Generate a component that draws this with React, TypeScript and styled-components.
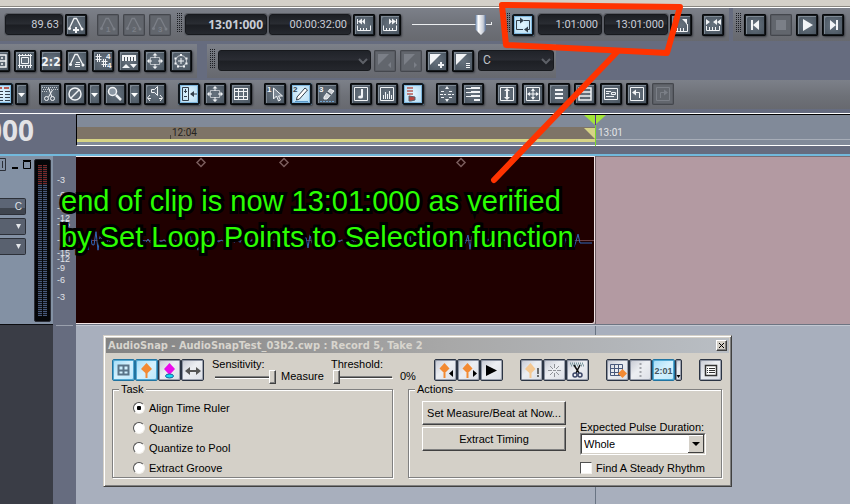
import React from 'react';
import styled, { createGlobalStyle, css } from 'styled-components';

const UI = '"Liberation Sans", Arial, sans-serif';
const TITLE = '"DejaVu Sans Condensed", "DejaVu Sans", sans-serif';

const GlobalStyle = createGlobalStyle`
  *, *::before, *::after { box-sizing: border-box; }
  body { margin: 0; background: #666c7f; font: 11px/12px ${UI}; color: #000; }
  button, select, input { font: inherit; margin: 0; }
  svg { display: block; flex: none; }
`;

const Page = styled.main`
  position: relative;
  display: flex;
  flex-direction: column;
  min-height: 100vh;
  overflow: hidden;
  background: #666c7f;
`;

const MenuEdge = styled.div`
  height: 8px;
  background: #d4d0c8;
  border-bottom: 1px solid #fff;
  box-shadow: inset 0 -1px #8a8780;
`;

/* ---------- toolbars ---------- */

const Toolbar = styled.div<{ $h: number; $gap?: number }>`
  display: flex;
  height: ${p => p.$h}px;
  margin-bottom: ${p => p.$gap ?? 3}px;
`;

const Panel = styled.div<{ $grow?: boolean; $top?: number }>`
  display: flex;
  align-items: flex-start;
  flex: ${p => (p.$grow ? '1 0 auto' : 'none')};
  padding-top: ${p => p.$top ?? 6}px;
  background: linear-gradient(#7c8089, #6e7178 55%, #67696f);
`;

const Group = styled.div<{ $lead?: number; $gap?: number }>`
  display: flex;
  flex: none;
  gap: ${p => p.$gap ?? 4}px;
  margin-left: ${p => p.$lead ?? 0}px;
`;

const Spacer = styled.div<{ $w: number }>`
  flex: none;
  width: ${p => p.$w}px;
`;

const Grip = styled.span`
  flex: none;
  width: 5px;
  height: 20px;
  margin: -1px 3px 0 0;
  background: conic-gradient(from 270deg at 1px 1px, #1b1d22 90deg, transparent 0) 0 0 / 2px 2px;
`;

const ToolButton = styled.button<{ $lit?: boolean; $narrow?: boolean }>`
  flex: none;
  width: ${p => (p.$narrow ? 13 : 22)}px;
  height: 22px;
  padding: 0;
  overflow: hidden;
  border: 0;
  border-radius: 2px;
  color: #f2f4f6;
  background: radial-gradient(#66727e, #434e59);
  box-shadow: inset 0 0 0 1px #06080a, inset 0 0 0 2px #15191d, inset 3px 3px #7d8893, 1px 1px 2px #3a3c42;
  ${p => p.$lit && css`
    color: #34404c;
    background: radial-gradient(#e4f6ff, #a4d2ee);
    box-shadow: inset 0 0 0 2px #10161c, inset 0 0 0 3px #7db5dc, 1px 1px 2px #3a3c42;
  `}
  &:disabled {
    color: #7b7f87;
    background: #62666d;
    box-shadow: inset 0 0 0 1px #44474d, inset 0 0 0 2px #595c63;
  }
`;

const Display = styled.output<{ $w: number; $strong?: boolean }>`
  flex: none;
  width: ${p => p.$w}px;
  height: 21px;
  padding-right: 3px;
  border: 1px solid #17191d;
  border-radius: 3px;
  background: linear-gradient(#1c1f24, #2a2d33 48%, #1b1d22 52%, #25282e);
  box-shadow: 0 0 0 1px #5b5e65;
  color: #c9cdd6;
  text-align: right;
  font: ${p => (p.$strong ? 'bold 12px/19px "Noto Sans"' : '11px/19px Roboto')}, sans-serif;
`;

const DarkSelectBox = styled.label<{ $w: number }>`
  display: grid;
  flex: none;
  width: ${p => p.$w}px;
  height: 21px;
  > * { grid-area: 1 / 1; }
  > svg { place-self: center end; margin-right: 3px; pointer-events: none; }
`;

const DarkSelect = styled.select`
  appearance: none;
  width: 100%;
  height: 21px;
  padding: 0 4px;
  border: 1px solid #17191d;
  border-radius: 3px;
  background: linear-gradient(#202329, #2a2c33 48%, #1d1f24 52%, #25272d);
  color: #c0c3ca;
  font: 12px/17px Roboto, sans-serif;
`;

const Fader = styled.input`
  appearance: none;
  flex: none;
  width: 80px;
  height: 22px;
  margin: 0;
  background: linear-gradient(#eceef0, #eceef0) 0 10px / 80px 1px no-repeat,
    linear-gradient(#eceef0, #eceef0) 79px 8px / 1px 3px no-repeat;
  &::-webkit-slider-thumb {
    appearance: none;
    width: 11px;
    height: 20px;
    background: linear-gradient(90deg, #4c6f9d, #fff 30%, #c6cbd5 75%, #526b92);
    clip-path: polygon(0 0, 100% 0, 100% 72%, 50% 100%, 0 72%);
  }
`;

/* ---------- icons on the 22px tool buttons ---------- */

const S = { stroke: 'currentColor', fill: 'none' };
const F = { fill: 'currentColor' };
const Digit = ({ x, y, c, size = 8 }: { x: number; y: number; c: string; size?: number }) => (
  <text x={x} y={y} fontSize={size} fontWeight="bold" fontFamily="Liberation Sans, sans-serif" fill="currentColor">{c}</text>
);
const metro = <g><path {...S} strokeWidth="1.3" d="M4.500 14L9 4.500h2.500L17 15" /><circle {...F} cx="4.500" cy="14.500" r="1.500" /><circle {...F} cx="17" cy="15" r="1.500" /></g>;
const arrows4 = <path {...F} d="M11 3l2.500 2.500h-2V8h-1V5.500h-2zM11 19l2.500-2.500h-2V14h-1v2.500h-2zM3 11l2.500-2.500v2H8v1H5.500v2zM19 11l-2.500-2.500v2H14v1h2.500v2z" />;
const frame = <path {...S} d="M4.500 4.500h13v13h-13z" />;
const corner = <path {...F} d="M4 4h11L4 15z" />;

const icons: Record<string, React.ReactNode> = {
  metroPlus: <g>{metro}<path {...S} strokeWidth="2" d="M11 13v6M8 16h6" /></g>,
  metro1: <g>{metro}<Digit x={9} y={18} c="1" /></g>,
  metro2: <g>{metro}<Digit x={9} y={18} c="2" /></g>,
  metro3: <g>{metro}<Digit x={9} y={18} c="3" /></g>,
  metroList: <g>{metro}<path {...S} d="M10 12.500h4M9 14.500h5M9 16.500h5" /></g>,
  gridBox: <path {...S} strokeWidth="1.500" d="M4 5h14v12H4zM11 5v12M4 11h14M7 8h2M13 8h2M7 14h2M13 14h2" />,
  film: <path {...S} d="M4 5.500h14M4 15.500h14M5.500 4v14M16.500 4v14M7.500 7.500h7v6h-7zM8.500 4v1M11.500 4v1M14.500 4v1M8.500 16v2M11.500 16v2M14.500 16v2" />,
  ratio: <text x="11" y="15.500" textAnchor="middle" fontSize="12" fontWeight="bold" fontFamily="DejaVu Sans Condensed, sans-serif" fill="currentColor">2:2</text>,
  sharps: <g><path {...S} d="M5.500 4v8M7.500 4v8M3.500 6.500h6M3.500 9.500h6M11.500 9v8M13.500 9v8M9.500 11.500h6M9.500 14.500h6" /><Digit x={14} y={9} c="4" /><Digit x={15} y={18} c="4" /></g>,
  rulerArrows: <g><path {...F} d="M4 5h14v6H4zM4 18l4-4 4 4zM12 14h7l-3.500 4z" /><path stroke="#46515c" d="M6.500 7v4M9.500 7v4M12.500 7v4M15.500 7v4" /></g>,
  move: <g>{arrows4}<path {...S} d="M6.500 7.500h9v7h-9z" opacity=".6" /></g>,
  ring: <g><circle {...S} cx="11" cy="11" r="5.500" opacity=".7" /><path {...S} d="M11 8v6M8 11h6" /><path {...S} strokeWidth="2" d="M10 5h2M4.500 8.500h2M15.500 8.500h2M4.500 13.500h2M15.500 13.500h2M7 16.500h2M13 16.500h2" /></g>,
  rewRuler: <g><path {...F} d="M4 5h1v5H4zM5 7.500l4-3v6zM9 7.500l3-3v6z" /><path {...S} d="M4.500 11.500v5h13v-5M7.500 14v2M10.500 14v2M13.500 14v2" /></g>,
  fwdRuler: <g><path {...F} d="M17 5h1v5h-1zM17 7.500l-4-3v6zM13 7.500l-3-3v6z" /><path {...S} d="M4.500 11.500v5h13v-5M7.500 14v2M10.500 14v2M13.500 14v2" /></g>,
  loop: <g><path {...S} d="M4.500 15.500v-9H8M12 6.500h5.500v9H16M11 15.500H4.500" /><path {...F} d="M8 3.500v6l4-3zM16 12.500v6l-4-3z" /></g>,
  punchIn: <g><path {...F} d="M17 5v6l-2-3-3-3z" /><path {...S} d="M4.500 12v5.500h13V10M7.500 14v3M10.500 14v3M13.500 14v3" /></g>,
  punchOut: <g><path {...F} d="M4 5l4 3-4 3zM11 8l4-3v6zM15 8l4-3v6z" /><path {...S} d="M4.500 12v4.500h13V12M7.500 13v3M10.500 13v3M13.500 13v3" /></g>,
  toStart: <path {...F} d="M7 6h2v10H7zM9 11l6-5v10z" />,
  toEnd: <path {...F} d="M14 6h2v10h-2zM14 11L8 6v10z" />,
  stop: <path {...F} d="M6 6h10v10H6z" />,
  play: <path {...F} d="M7 5v12l10-6z" />,
  cornerLeft: <g>{corner}<path {...F} d="M17 12v6l-3-3z" /></g>,
  cornerRight: <g>{corner}<path {...F} d="M14 12v6l3-3z" /></g>,
  cornerPlus: <g>{corner}<path {...S} strokeWidth="2" d="M15 12v6M12 15h6" /></g>,
  cornerList: <g>{corner}<path {...S} d="M14 13.500h4M14 15.500h4M14 17.500h4" /></g>,
  columns: <g><path stroke="#b65c56" strokeWidth="2" d="M0 5h11M13 5h5" /><path {...S} strokeDasharray="5 2" d="M0 8.500h19M0 11.500h19M0 14.500h19M0 17.500h19" /></g>,
  cut: <g><path {...S} strokeDasharray="1 1" opacity=".7" d="M3 4.500h16M4 6.500h15M3 8.500h6" /><path {...S} d="M9.500 5l3.500 9M13.500 7l-4 7" /><circle {...S} cx="7.500" cy="15.500" r="2" /><circle {...S} cx="13.500" cy="15.500" r="2" /></g>,
  mute: <g><circle {...S} strokeWidth="1.500" cx="11" cy="11" r="6" /><path {...S} strokeWidth="1.500" d="M7 15l8-8" /></g>,
  zoom: <g><circle fill="#8b97a3" stroke="currentColor" strokeWidth="1.500" cx="8.500" cy="8.500" r="4" /><path {...S} strokeWidth="2.500" d="M12 12l5 5" /></g>,
  scrub: <path {...S} d="M7.500 6.500h3l3-3v9l-3-3h-3zM6 12l-2.500 3L6 18M16 12l2.500 3L16 18M4 15.500h3M15 15.500h3" />,
  dock: <g><path {...S} d="M4.500 4.500h6v13h-6zM7.500 6v4M6 8.500h3M6 13.500h3M13 11h6" /><path {...F} d="M12 11l4-3v6z" /></g>,
  filmWide: <path {...S} d="M4 5.500h14M4 8.500h14M4 13.500h14M4 16.500h14M4.500 5v12M8.500 5v12M13.500 5v12M17.500 5v12" />,
  select1: <g><Digit x={3} y={9} c="1" /><path {...S} d="M9.500 5v11l3-3 2 5 2-1-2-4h4z" fill="#7d8894" /></g>,
  pencil2: <g><Digit x={3} y={9} c="2" /><path {...S} d="M7 14l8-9 2.500 2-8 9-3 1z" fill="#fff" /><path {...S} d="M5 18.500h13" stroke="#5b9aca" /></g>,
  erase3: <g><Digit x={3} y={9} c="3" /><path {...S} d="M8 14l6-8 4 2-7 8H8z" fill="#cfd3d8" /><path d="M11 9l4 3" stroke="#46515c" strokeWidth="1.500" /><path stroke="#6fa2cf" strokeDasharray="2 1" d="M4 18.500h14" /></g>,
  note: <g>{frame}<path {...F} d="M11 6h2v8h-2z" /><ellipse {...F} cx="10.500" cy="14" rx="2.500" ry="1.500" /></g>,
  bars: <g>{frame}<path {...S} d="M7.500 12v4M9.500 9v7M11.500 11v5M13.500 8v8M15.500 12v4" /></g>,
  clipList: <g><path stroke="#b65c56" strokeWidth="1.500" d="M5 5h6M5 8h6M5 11h6" /><path d="M7 13l6 1v3l-4 1H7z" fill="#b8443c" stroke="#54606c" /></g>,
  spread: <g><path {...F} d="M11 3l2 3H9zM11 19l2-3H9z" /><path {...S} strokeDasharray="3 1" d="M5 8.500h4M13 8.500h4M4 11.500h6M12 11.500h6M5 14.500h4M13 14.500h4" /></g>,
  listBars: <g><path {...F} d="M9 4h9v2H9zM9 8h9v2H9zM9 12h9v2H9zM12 16h6v2h-6z" /><path {...S} d="M4 5.500h5M4 9.500h5M4 13.500h5" /></g>,
  vArrows: <g>{frame}<path {...F} d="M11 5l3 3h-2v6h2l-3 3-3-3h2V8H8z" /></g>,
  allArrows: <g>{frame}<path {...S} d="M11 6v10M6 11h10" /><path {...F} d="M11 5l2 3H9zM11 17l2-3H9zM5 11l3-2v4zM17 11l-3-2v4z" /></g>,
  lines: <path {...S} strokeWidth="2" d="M7 7h8M7 11h8M7 15h8" />,
  lineFrame: <path {...S} strokeWidth="1.500" d="M5 5h12v12H5zM5 9h12M5 13h12" />,
  flagFrame: <path {...S} d="M4.500 5.500h13v11h-13zM6 8.500h5M6 10.500h3M6 13.500h8M11.500 9.500h4v2h-4z" />,
  undoFrame: <g>{frame}<path {...S} d="M9 9.500h4.500V15" /><path {...F} d="M6 9.500l4-3v6z" /></g>,
  redoFrame: <g>{frame}<path {...S} d="M8.500 15V9.500H13" /><path {...F} d="M16 9.500l-4-3v6z" /></g>,
};

type ToolProps = { icon: string; label: string; lit?: boolean; off?: boolean };
const Tool = ({ icon, label, lit, off }: ToolProps) => (
  <ToolButton type="button" aria-label={label} $lit={lit} disabled={off}>
    <svg width="22" height="22" viewBox="0 0 22 22">{icons[icon]}</svg>
  </ToolButton>
);
const More = ({ label }: { label: string }) => (
  <ToolButton type="button" aria-label={label} $narrow>
    <svg width="13" height="22" viewBox="0 0 13 22"><path fill="#fff" d="M3 10h7l-3.500 4z" /></svg>
  </ToolButton>
);
const Chevron = () => (
  <svg width="10" height="8" viewBox="0 0 10 8"><path d="M1 2l4 4 4-4" fill="none" stroke="#5d6067" strokeWidth="2" /></svg>
);

const Transport = () => (
  <Toolbar $h={33}>
    <Panel>
      <Group $lead={5} $gap={2}>
        <Display $w={58} aria-label="Tempo">89.63</Display>
        <Tool icon="metroPlus" label="Insert tempo" />
      </Group>
      <Group $lead={10}>
        <Tool icon="metro1" label="Tempo ratio 1" off />
        <Tool icon="metro2" label="Tempo ratio 2" off />
        <Tool icon="metro3" label="Tempo ratio 3" off />
      </Group>
      <Spacer $w={6} />
      <Grip />
      <Group $gap={2}>
        <Display $w={82} $strong aria-label="Now time">13:01:000</Display>
        <Display $w={82} aria-label="Now time in frames">00:00:32:00</Display>
      </Group>
      <Group $lead={2}>
        <Tool icon="rewRuler" label="Previous measure" />
        <Tool icon="fwdRuler" label="Next measure" />
      </Group>
      <Spacer $w={11} />
      <Fader type="range" aria-label="Position" defaultValue={92} />
    </Panel>
    <Panel>
      <Spacer $w={13} />
      <Grip />
      <Group $gap={2} $lead={-1}>
        <Tool icon="loop" label="Loop" lit />
        <Spacer $w={0} />
        <Display $w={64} aria-label="Loop start">1:01:000</Display>
        <Display $w={64} aria-label="Loop end">13:01:000</Display>
      </Group>
      <Group $lead={2} $gap={10}>
        <Tool icon="punchIn" label="Set loop points to selection" />
        <Tool icon="punchOut" label="Set punch points" />
      </Group>
      <Spacer $w={5} />
    </Panel>
    <Spacer $w={4} />
    <Panel $grow>
      <Spacer $w={3} />
      <Grip />
      <Group>
        <Tool icon="toStart" label="Go to start" />
        <Tool icon="stop" label="Stop" off />
        <Tool icon="play" label="Play" />
        <Tool icon="toEnd" label="Go to end" />
      </Group>
    </Panel>
  </Toolbar>
);

const SnapBar = () => (
  <Toolbar $h={34} $gap={2}>
    <Panel>
      <Group $lead={-12}>
        <Tool icon="gridBox" label="Grid" />
        <Tool icon="film" label="Fit to time" />
        <Tool icon="ratio" label="Length" />
        <Tool icon="metroList" label="Tempo list" />
        <Tool icon="sharps" label="Meter and key" />
        <Tool icon="rulerArrows" label="Ruler" />
        <Tool icon="move" label="Slide" />
        <Tool icon="ring" label="Process" />
      </Group>
      <Spacer $w={5} />
    </Panel>
    <Spacer $w={10} />
    <Panel>
      <Spacer $w={3} />
      <Grip />
      <DarkSelectBox $w={153}>
        <DarkSelect aria-label="Marker"><option></option></DarkSelect>
        <Chevron />
      </DarkSelectBox>
      <Group $lead={3}>
        <Tool icon="cornerLeft" label="Previous marker" off />
        <Tool icon="cornerRight" label="Next marker" off />
        <Tool icon="cornerPlus" label="Insert marker" />
        <Tool icon="cornerList" label="Marker list" />
      </Group>
      <Spacer $w={4} />
      <DarkSelectBox $w={76}>
        <DarkSelect aria-label="Key"><option>C</option></DarkSelect>
        <Chevron />
      </DarkSelectBox>
      <Spacer $w={2} />
    </Panel>
  </Toolbar>
);

const TrackBar = () => (
  <Toolbar $h={29} $gap={4}>
    <Panel $grow $top={3}>
      <Group $lead={-9} $gap={2}>
        <Tool icon="columns" label="Snap grid" lit />
        <More label="Snap options" />
      </Group>
      <Group $lead={11} $gap={3}>
        <Tool icon="cut" label="Split" />
        <Group $gap={2}><Tool icon="mute" label="Mute" /><More label="Mute options" /></Group>
        <Group $gap={2}><Tool icon="zoom" label="Zoom" /><More label="Zoom options" /></Group>
        <Tool icon="scrub" label="Scrub" />
      </Group>
      <Group $lead={12}>
        <Tool icon="dock" label="Show inspector" lit />
        <Tool icon="move" label="Navigator" />
        <Tool icon="filmWide" label="Video" />
      </Group>
      <Group $lead={12}>
        <Tool icon="select1" label="Select tool" />
        <Tool icon="pencil2" label="Draw tool" lit />
        <Tool icon="erase3" label="Erase tool" />
      </Group>
      <Group $lead={12}>
        <Tool icon="note" label="Notes" />
        <Tool icon="bars" label="Controllers" />
        <Tool icon="clipList" label="Track layers" lit />
      </Group>
      <Group $lead={12}>
        <Tool icon="spread" label="Spread" />
        <Tool icon="listBars" label="Layers" />
      </Group>
      <Group $lead={12}>
        <Tool icon="vArrows" label="Fit tracks vertically" />
        <Tool icon="allArrows" label="Fit project" />
        <Tool icon="lines" label="Show all tracks" />
        <Tool icon="lineFrame" label="Show selected tracks" />
        <Tool icon="flagFrame" label="Track manager" />
        <Tool icon="undoFrame" label="Undo view" />
        <Tool icon="redoFrame" label="Redo view" off />
      </Group>
    </Panel>
  </Toolbar>
);

/* ---------- ruler and track ---------- */

const CLIP = 519;

const RulerRow = styled.div`
  display: flex;
  height: 33px;
  border-top: 1px solid #fff;
`;

const NowTime = styled.div`
  display: flex;
  justify-content: flex-end;
  flex: none;
  width: 76px;
  padding-right: 42px;
  color: #e3e3e6;
  font: bold 28px/32px "Noto Sans", sans-serif;
`;

const Ruler = styled.div`
  display: flex;
  flex: 1;
  position: relative;
  border: solid #000;
  border-width: 1px 0 0 1px;
  border-bottom: 1px solid #fff;
  background: #818a99;
  color: #e3e4e6;
  font: 10px/12px Roboto, sans-serif;
`;

const LoopSpan = styled.div`
  flex: none;
  width: ${CLIP}px;
  height: 15px;
  margin-top: 12px;
  padding-left: 93px;
  border-bottom: 3px solid #d6d385;
  background: #7e7467;
  color: #26241f;
`;

const Beat = styled.span<{ $dark?: boolean }>`
  display: block;
  padding-left: 2px;
  background: linear-gradient(#4b463f, #4b463f) 0 100% / ${p => (p.$dark ? 1 : 0)}px 4px no-repeat;
`;

const AfterLoop = styled.div`
  flex: 1;
  height: 13px;
  margin-top: 12px;
  border-bottom: 1px solid #a7adb8;
`;

const NowMarker = styled.svg`
  position: absolute;
  left: 507px;
  top: 0;
`;

const Divider = styled.div`
  height: 10px;
  border-bottom: 2px solid #72b9dc;
`;

const TrackRow = styled.section`
  display: flex;
  height: 169px;
`;

const Strip = styled.div`
  display: flex;
  flex: none;
  width: 53px;
  background: #8391a4;
  border-bottom: 1px solid #0c0d10;
`;

const StripControls = styled.div`
  display: flex;
  flex-direction: column;
  width: 34px;
`;

const WindowMarks = styled.svg`
  margin-bottom: 20px;
`;

const StripButton = styled.button<{ $shade?: boolean }>`
  width: 26px;
  height: 17px;
  margin-bottom: 3px;
  padding: 0 3px 0 0;
  border: 1px solid #2c3038;
  border-left: 0;
  border-radius: 0 2px 2px 0;
  background: ${p => (p.$shade ? 'linear-gradient(#5c6575 60%, #3f454f 60%)' : '#59616f')};
  color: #dfe2e8;
  text-align: right;
  font: 10px/13px "Liberation Sans", sans-serif;
  > svg { margin-left: auto; }
`;

const Meter = styled.div`
  display: flex;
  gap: 1px;
  width: 17px;
  height: 163px;
  margin-top: 3px;
  padding: 5px 3px;
  border: 1px solid #2a2d36;
  border-radius: 2px;
  background: #050608;
`;

const Leds = styled.span`
  flex: 1;
  background: repeating-linear-gradient(transparent 0 1px, #12151c 1px 2px),
    linear-gradient(#7a2a2a 20px, #47597a 20px);
`;

const Scale = styled.div`
  flex: none;
  width: 23px;
  padding-top: 19px;
  background: #666c7f;
  color: #e0e2e8;
  font: 9px/10px "Liberation Sans", sans-serif;
`;

const Mark = styled.div<{ $h: number }>`
  height: ${p => p.$h}px;
  padding-left: 4px;
`;

const Lane = styled.div`
  flex: 1;
  display: flex;
  border-bottom: 1px solid #6d7482;
  background: #b39aa2;
`;

const Clip = styled.div`
  flex: none;
  width: ${CLIP}px;
  border: 1px solid #f2e4e4;
  border-left: 0;
  border-bottom-right-radius: 3px;
  background: #200000;
`;

const LaneRest = styled.div`
  flex: 1;
  border-left: 1px solid #6e5f66;
  border-top: 1px solid #7a6d74;
  background: #b39aa2;
`;

const Below = styled.section`
  display: flex;
  flex: 1;
`;

const BelowLeft = styled.div`
  flex: none;
  width: 53px;
  background: #3a3d46;
`;

const BelowScale = styled.div`
  flex: none;
  width: 23px;
  padding: 0 3px;
  &::before { content: ''; display: block; height: 1px; background: #9aa0ad; }
`;

const BelowLane = styled.div`
  flex: 1;
  border-top: 1px solid #c3c8d2;
  background: #a8afbd;
  &::before { content: ''; display: block; width: ${CLIP + 1}px; height: 100%; border-right: 1px solid #697483; }
`;

const scaleMarks: [string, number][] = [
  ['-3', 15], ['-6', 13], ['-9', 10], ['-12', 6], ['-15', 16], ['-∞', 13],
  ['-15', 6], ['-12', 9], ['-9', 12], ['-6', 17], ['-3', 10],
];

const wave = Array.from({ length: 259 }, (_, i) => {
  const x = i * 2;
  const burst = Math.max(0, Math.sin(x / 11) * Math.sin(x / 37 + 1));
  const y = 84 + Math.sin(i * 2.4) * (1.5 + burst * 9);
  return `${i ? 'L' : 'M'}${x} ${x > 503 ? 86 : y.toFixed(1)}`;
}).join('');

const Down = () => (
  <svg width="7" height="6" viewBox="0 0 7 6"><path d="M1 0h5L3.500 5z" fill="#e3e6ea" /></svg>
);

const Arrange = () => (
  <>
    <RulerRow>
      <NowTime>000</NowTime>
      <Ruler>
        <LoopSpan><Beat $dark>12:04</Beat></LoopSpan>
        <AfterLoop><Beat>13:01</Beat></AfterLoop>
        <NowMarker width="22" height="31" viewBox="0 0 22 31">
          <path d="M0 0h22L11 10z" fill="#a2e43a" />
          <path d="M0 13h11v11z" fill="#d6d385" />
          <path d="M11.500 0v10" stroke="#5a2c96" />
          <path d="M11.500 10v21" stroke="#7ad82c" />
        </NowMarker>
      </Ruler>
    </RulerRow>
    <Divider />
    <TrackRow>
      <Strip>
        <StripControls>
          <WindowMarks width="34" height="22" viewBox="0 0 34 22">
            <path d="M0 2.500h5.500v12H0M2.500 5v7" fill="none" stroke="#2c3038" />
            <path d="M12 12h6" stroke="#000" strokeWidth="2" />
            <path d="M23.500 5.500h7v7h-7zM23 4.500h8" fill="none" stroke="#000" />
          </WindowMarks>
          <StripButton type="button" $shade>C</StripButton>
          <StripButton type="button" aria-label="Input"><Down /></StripButton>
          <StripButton type="button" aria-label="Output"><Down /></StripButton>
        </StripControls>
        <Meter><Leds /><Leds /></Meter>
      </Strip>
      <Scale>{scaleMarks.map(([t, h], i) => <Mark key={i} $h={h}>{t}</Mark>)}</Scale>
      <Lane>
        <Clip>
          <svg width="518" height="165" viewBox="0 0 518 165">
            <path d="M0 83.500h518" stroke="#6c4046" />
            <path d={wave} fill="none" stroke="#2f66b8" />
            {[125, 208, 385].map(x => (
              <path key={x} d={`M${x} 1.500l4 4-4 4-4-4z`} fill="none" stroke="#7a5c5c" strokeWidth="1.500" />
            ))}
          </svg>
        </Clip>
        <LaneRest />
      </Lane>
    </TrackRow>
    <Below><BelowLeft /><BelowScale /><BelowLane /></Below>
  </>
);

/* ---------- AudioSnap window ---------- */

const raised = css`
  border: 1px solid;
  border-color: #fff #404040 #404040 #fff;
  box-shadow: inset -1px -1px #808080;
  background: #d4d0c8;
`;

const Window = styled.section`
  position: absolute;
  left: 103px;
  top: 335px;
  width: 629px;
  padding: 2px;
  border: 1px solid;
  border-color: #d4d0c8 #404040 #404040 #d4d0c8;
  box-shadow: inset 1px 1px #fff, inset -1px -1px #808080;
  background: #d4d0c8;
`;

const TitleBar = styled.header`
  display: flex;
  align-items: center;
  justify-content: space-between;
  height: 15px;
  padding: 0 2px;
  background: linear-gradient(90deg, #838383, #a8a8a8 55%, #b9bec4);
  color: #d8d5ce;
  font: bold 11px/15px ${TITLE};
`;

const Title = styled.h1`
  margin: 0;
  font: inherit;
`;

const CloseButton = styled.button`
  ${raised}
  width: 11px;
  height: 11px;
  padding: 1px;
`;

const WindowBar = styled.div`
  display: flex;
  padding: 6px 6px 0;
  height: 30px;
`;

const SnapButton = styled.button<{ $lit?: boolean; $slim?: boolean }>`
  flex: none;
  width: ${p => (p.$slim ? 7 : 23)}px;
  height: 22px;
  padding: 0;
  border: 1px solid #2b3443;
  border-radius: 2px;
  background: linear-gradient(135deg, #c5c8d2, #eceef2 45%, #dcdfe6);
  box-shadow: inset 1px 1px #8c93a2, inset -1px -1px #9ca2af;
  ${p => p.$lit && css`
    border-color: #2173a0;
    background: linear-gradient(135deg, #a2dcf7, #d4f1fe 50%, #bde7fb);
    box-shadow: inset 1px 1px #52a8d2, inset -1px -1px #52a8d2;
  `}
  > svg { margin: -1px; }
`;

const SliderField = styled.label<{ $w: number }>`
  display: grid;
  flex: none;
  width: ${p => p.$w}px;
  margin-top: -1px;
  grid-template: 12px 14px / 64px 1fr;
  column-gap: 5px;
`;

const SliderName = styled.span`
  grid-column: 1 / -1;
  white-space: nowrap;
`;

const SliderTrack = styled.input`
  appearance: none;
  width: 64px;
  height: 14px;
  background: linear-gradient(#808080, #808080) 3px 6px / 58px 1px no-repeat,
    linear-gradient(#404040, #404040) 3px 7px / 58px 1px no-repeat,
    linear-gradient(#fff, #fff) 3px 8px / 59px 1px no-repeat;
  &::-webkit-slider-thumb {
    appearance: none;
    ${raised}
    width: 7px;
    height: 14px;
  }
`;

const Boxes = styled.div`
  display: flex;
  gap: 15px;
  padding: 0 6px 6px;
`;

const Box = styled.fieldset<{ $w: number }>`
  flex: none;
  width: ${p => p.$w}px;
  height: 95px;
  margin: 0;
  padding: 0;
  border: 1px solid #808080;
  box-shadow: 1px 1px #fff, inset 1px 1px #fff;
  legend { margin-left: 6px; padding: 0 2px; background: #d4d0c8; }
`;

const Radios = styled.div`
  display: grid;
  grid-auto-rows: 12px;
  row-gap: 8px;
  padding: 7px 0 0 20px;
`;

const Option = styled.label`
  display: flex;
  align-items: center;
  gap: 4px;
  white-space: nowrap;
`;

const Radio = styled.input`
  appearance: none;
  width: 12px;
  height: 12px;
  border: 1px solid;
  border-color: #505050 #f4f2ee #f4f2ee #505050;
  border-radius: 50%;
  background: #fff;
  &:checked { background: radial-gradient(#000 0 2px, #fff 2.500px); }
`;

const Check = styled.input`
  appearance: none;
  width: 12px;
  height: 12px;
  border: 1px solid;
  border-color: #505050 #f4f2ee #f4f2ee #505050;
  background: #fff;
`;

const ActionGrid = styled.div`
  display: grid;
  grid-template-columns: 144px 126px;
  column-gap: 14px;
  padding: 0 13px;
`;

const ActionColumn = styled.div<{ $top?: number; $gap: number }>`
  display: flex;
  flex-direction: column;
  gap: ${p => p.$gap}px;
  padding-top: ${p => p.$top ?? 0}px;
`;

const ActionButton = styled.button`
  ${raised}
  height: 24px;
  padding: 0;
  white-space: nowrap;
`;

const PulseLabel = styled.label`
  display: block;
  white-space: nowrap;
`;

const PulseBox = styled.div`
  display: grid;
  height: 22px;
  border: 1px solid;
  border-color: #808080 #fff #fff #808080;
  > * { grid-area: 1 / 1; }
  > svg { place-self: center end; margin-right: 1px; pointer-events: none; }
`;

const PulseSelect = styled.select`
  appearance: none;
  width: 100%;
  height: 20px;
  padding: 0 2px;
  border: 1px solid;
  border-color: #404040 #d4d0c8 #d4d0c8 #404040;
  border-radius: 0;
  background: #fff;
  color: #000;
`;

const OR = '#f38a33';
const snapIcons: Record<string, React.ReactNode> = {
  grid: <path d="M6.500 6.500h10v9h-10zM11.500 6v10M6 11.500h11" fill="none" stroke="#5a7488" strokeWidth="2" />,
  pin: <g><path d="M11.500 4l5.500 6-5.500 5L6 10z" fill={OR} /><path d="M11.500 14v5" stroke={OR} strokeWidth="2" /></g>,
  pool: <g><path d="M11.500 4l5.500 6-5.500 6L6 10z" fill="#ea0bea" /><ellipse cx="11.500" cy="17" rx="4" ry="2" fill="#18d8ee" stroke="#1b5ea0" /></g>,
  width: <path d="M4 12l5-4v3h6V8l5 4-5 4v-3H9v3z" fill="#555" />,
  prev: <g><path d="M10.500 4l5 5.500-5 5-5-5z" fill={OR} /><path d="M10.500 14v5" stroke={OR} strokeWidth="2" /><path d="M19 11v7l-4-3.500z" /></g>,
  next: <g><path d="M10.500 4l5 5.500-5 5-5-5z" fill={OR} /><path d="M10.500 14v5" stroke={OR} strokeWidth="2" /><path d="M16 11v7l4-3.500z" /></g>,
  play: <path d="M6 6v11l11-5.500z" />,
  warn: <g><path d="M10.500 4l5 6-5 5-5.500-5z" fill="#f4c892" /><path d="M10.500 14v5" stroke="#f4c892" strokeWidth="2" /><path d="M18 9v6M18 16v2" stroke="#6d6d6d" strokeWidth="2" /></g>,
  burst: <path d="M11.500 5v4M11.500 14v4M5 11.500h4M14 11.500h4M7 7l3 3M13 13l3 3M16 7l-3 3M10 13l-3 3M10 11.500h3" stroke="#8f9298" />,
  cut: <g><path d="M4 4.500h14M5 6.500h13" stroke="#7b98a0" strokeWidth="2" strokeDasharray="1 1" /><path d="M8 6l5 8M14 6l-4 8" stroke="#111" strokeWidth="1.500" /><circle cx="9" cy="16" r="2" fill="none" stroke="#3b4567" strokeWidth="1.500" /><circle cx="14" cy="16" r="2" fill="none" stroke="#3b4567" strokeWidth="1.500" /></g>,
  gridPin: <g><path d="M4.500 5.500h12v11h-12zM8.500 5v12M12.500 5v12M4 9.500h13M4 13.500h13" fill="none" stroke="#49597c" /><path d="M16.500 10l4.500 4.500-4.500 4.500-4.500-4.500z" fill={OR} /></g>,
  dots: <path d="M11.500 4v15" stroke="#a3a6ac" strokeWidth="2" strokeDasharray="2 2" />,
  list: <g><path d="M6.500 6.500h11v10h-11z" fill="#fff" stroke="#333" strokeWidth="1.500" /><path d="M8 9.500h1M10 9.500h6M8 11.500h1M10 11.500h6M8 13.500h1M10 13.500h6" stroke="#333" /></g>,
  time: <text x="11.500" y="14.500" textAnchor="middle" fontSize="9" fontWeight="bold" fontFamily="Liberation Sans, sans-serif" fill="#46545c">2:01</text>,
};

const Snap = ({ icon, label, lit }: { icon: string; label: string; lit?: boolean }) => (
  <SnapButton type="button" aria-label={label} $lit={lit}>
    <svg width="23" height="22" viewBox="0 0 23 22">{snapIcons[icon]}</svg>
  </SnapButton>
);

const AudioSnap = () => (
  <Window aria-label="AudioSnap">
    <TitleBar>
      <Title>AudioSnap - AudioSnapTest_03b2.cwp : Record 5, Take 2</Title>
      <CloseButton type="button" aria-label="Close">
        <svg width="7" height="7" viewBox="0 0 7 7"><path d="M1 1l5 5M6 1L1 6" stroke="#000" /></svg>
      </CloseButton>
    </TitleBar>
    <WindowBar>
      <Group $gap={0}>
        <Snap icon="grid" label="Edit clip map" lit />
        <Snap icon="pin" label="Show transients" lit />
        <Snap icon="pool" label="Show pool" />
        <Snap icon="width" label="Stretch" />
      </Group>
      <Spacer $w={8} />
      <SliderField $w={116}>
        <SliderName>Sensitivity:</SliderName>
        <SliderTrack type="range" defaultValue={100} />
        <span>Measure</span>
      </SliderField>
      <Spacer $w={3} />
      <SliderField $w={103}>
        <SliderName>Threshold:</SliderName>
        <SliderTrack type="range" defaultValue={4} />
        <span>0%</span>
      </SliderField>
      <Group $gap={0}>
        <Snap icon="prev" label="Previous transient" />
        <Snap icon="next" label="Next transient" />
        <Snap icon="play" label="Audition" />
      </Group>
      <Group $gap={0} $lead={17}>
        <Snap icon="warn" label="Promote marker" />
        <Snap icon="burst" label="Reset" />
        <Snap icon="cut" label="Split beats" />
      </Group>
      <Group $gap={0} $lead={17}>
        <Snap icon="gridPin" label="Apply to pool" />
        <Snap icon="dots" label="Beat lines" />
        <Snap icon="time" label="Beat values" lit />
        <SnapButton type="button" aria-label="Beat value options" $slim>
          <svg width="7" height="22" viewBox="0 0 7 22"><path d="M1.500 16h4l-2 3z" /></svg>
        </SnapButton>
      </Group>
      <Group $lead={17}><Snap icon="list" label="Options" /></Group>
    </WindowBar>
    <Boxes>
      <Box $w={281}>
        <legend>Task</legend>
        <Radios>
          {['Align Time Ruler', 'Quantize', 'Quantize to Pool', 'Extract Groove'].map((t, i) => (
            <Option key={t}><Radio type="radio" name="task" defaultChecked={i === 0} />{t}</Option>
          ))}
        </Radios>
      </Box>
      <Box $w={314}>
        <legend>Actions</legend>
        <ActionGrid>
          <ActionColumn $gap={2} $top={6}>
            <ActionButton type="button">Set Measure/Beat at Now...</ActionButton>
            <ActionButton type="button">Extract Timing</ActionButton>
          </ActionColumn>
          <ActionColumn $gap={7} $top={26}>
            <div>
              <PulseLabel htmlFor="pulse">Expected Pulse Duration:</PulseLabel>
              <PulseBox>
                <PulseSelect id="pulse"><option>Whole</option></PulseSelect>
                <svg width="16" height="18" viewBox="0 0 16 18">
                  <path d="M0 0h16v18H0z" fill="#d4d0c8" />
                  <path d="M.5 17V.5H15" fill="none" stroke="#fff" />
                  <path d="M15.500 0v17.500H0" fill="none" stroke="#404040" />
                  <path d="M4 7h8l-4 4z" />
                </svg>
              </PulseBox>
            </div>
            <Option><Check type="checkbox" />Find A Steady Rhythm</Option>
          </ActionColumn>
        </ActionGrid>
      </Box>
    </Boxes>
  </Window>
);

/* ---------- annotations drawn over the page ---------- */

const Marking = styled.svg`
  position: absolute;
  left: 490px;
  top: 0;
  pointer-events: none;
`;

const Note = styled.p`
  position: absolute;
  left: 61px;
  top: 183px;
  margin: 0;
  color: #2bff00;
  font: 29px/36px "Liberation Sans", Arial, sans-serif;
  white-space: pre-line;
  -webkit-text-stroke: 6px #000;
  paint-order: stroke fill;
  stroke-linejoin: round;
`;

export default function App() {
  return (
    <Page>
      <GlobalStyle />
      <MenuEdge />
      <Transport />
      <SnapBar />
      <TrackBar />
      <Arrange />
      <AudioSnap />
      <Note>{'end of clip is now 13:01:000 as verified\nby Set Loop Points to Selection function'}</Note>
      <Marking width="200" height="190" viewBox="0 0 200 190">
        <path d="M12 5L190 7L177 53L16 45ZM127 52L4 180" fill="none" stroke="#ff3300" strokeWidth="6" strokeLinecap="round" strokeLinejoin="round" />
      </Marking>
    </Page>
  );
}
